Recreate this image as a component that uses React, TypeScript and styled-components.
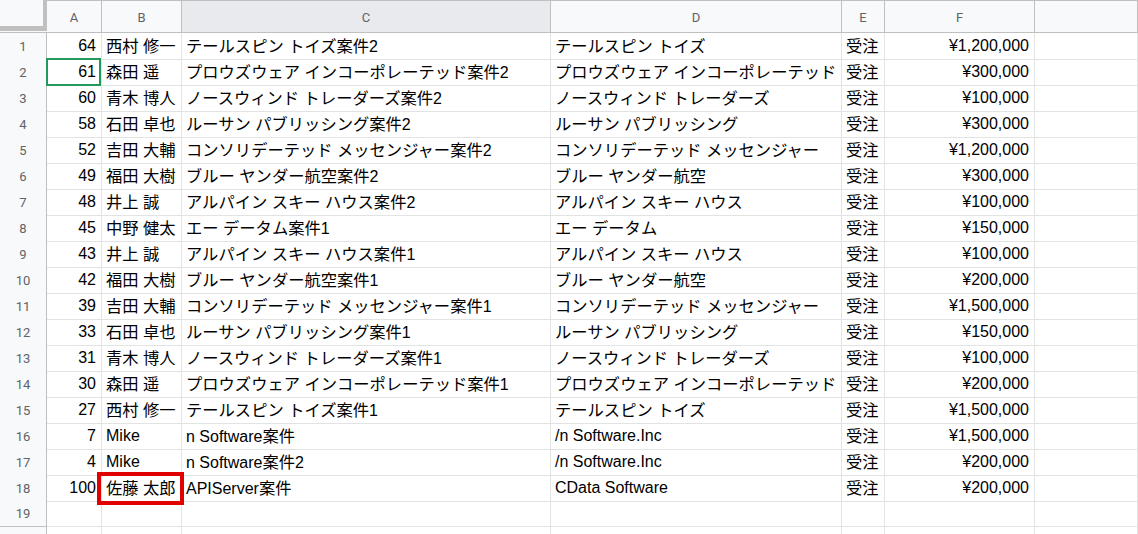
import React from "react";
import styled, { createGlobalStyle, css } from "styled-components";

const Global = createGlobalStyle`
  html, body { margin: 0; padding: 0; background: #fff; overflow: hidden; }
  body { font-family: "Liberation Sans", "Noto Sans CJK JP", sans-serif; }
`;

const COLS = "47px 55px 80px 369px 291px 43px 150px 1fr";

const Sheet = styled.div`
  width: 1138px;
  height: 534px;
  overflow: hidden;
  display: flex;
  flex-direction: column;
`;

const HeaderRow = styled.div`
  display: grid;
  grid-template-columns: ${COLS};
  height: 33px;
  flex: none;
`;

const Corner = styled.div`
  box-sizing: border-box;
  background: #f8f9fa;
  border-bottom: 1px solid #c0c0c0;
  display: flex;
  flex-direction: column;
`;

const CornerInner = styled.div`
  box-sizing: border-box;
  width: 47px;
  height: 31px;
  border-right: 4px solid #c0c0c0;
  border-bottom: 5px solid #c0c0c0;
`;

const ColHead = styled.div<{ $active?: boolean }>`
  box-sizing: border-box;
  border-top: 1px solid #c0c0c0;
  border-bottom: 1px solid #c0c0c0;
  border-right: 1px solid #c0c0c0;
  background: ${(p) => (p.$active ? "#e8eaed" : "#f8f9fa")};
  color: #5f6368;
  font-family: Roboto, "Liberation Sans", sans-serif;
  font-size: 13px;
  display: flex;
  align-items: center;
  justify-content: center;
  padding-top: 1px;
`;

const Row = styled.div`
  display: grid;
  grid-template-columns: ${COLS};
  height: 26px;
  flex: none;
`;

const RowHead = styled.div`
  box-sizing: border-box;
  background: #f8f9fa;
  border-right: 1px solid #c0c0c0;
  border-bottom: 1px solid #c0c0c0;
  color: #5f6368;
  font-family: Roboto, "Liberation Sans", sans-serif;
  font-size: 13px;
  display: flex;
  align-items: center;
  justify-content: center;
`;

const Cell = styled.div<{ $num?: boolean }>`
  position: relative;
  box-sizing: border-box;
  border-right: 1px solid #e2e3e3;
  border-bottom: 1px solid #e2e3e3;
  color: #000;
  font-size: 16px;
  line-height: 25px;
  white-space: nowrap;
  padding: 0 4px;
  text-align: ${(p) => (p.$num ? "right" : "left")};
  ${(p) =>
    p.$num &&
    css`
      padding-right: 5px;
    `}
`;

const Jp = styled.span`
  font-family: "Noto Sans CJK JP", sans-serif;
  font-size: 16.3px;
`;

const Selection = styled.div`
  position: absolute;
  top: -1px;
  left: -1px;
  right: 0;
  bottom: -1px;
  border: 2px solid #219a5b;
  pointer-events: none;
`;

const Highlight = styled.div`
  position: absolute;
  top: -3px;
  left: -5px;
  right: -3px;
  bottom: -4px;
  border: 4px solid #e00000;
  pointer-events: none;
  z-index: 2;
`;

const CJK = /[\u3000-\u30ff\u3400-\u9fff\uff00-\uffef]/;

function Txt({ t }: { t: string }) {
  const parts: { jp: boolean; s: string }[] = [];
  for (const ch of t) {
    const jp = CJK.test(ch);
    const last = parts[parts.length - 1];
    if (last && last.jp === jp) last.s += ch;
    else parts.push({ jp, s: ch });
  }
  return (
    <>
      {parts.map((p, i) => (p.jp ? <Jp key={i}>{p.s}</Jp> : <span key={i}>{p.s}</span>))}
    </>
  );
}

type R = [string, string, string, string, string, string];

const data: R[] = [
  ["64", "西村 修一", "テールスピン トイズ案件2", "テールスピン トイズ", "受注", "¥1,200,000"],
  ["61", "森田 遥", "プロウズウェア インコーポレーテッド案件2", "プロウズウェア インコーポレーテッド", "受注", "¥300,000"],
  ["60", "青木 博人", "ノースウィンド トレーダーズ案件2", "ノースウィンド トレーダーズ", "受注", "¥100,000"],
  ["58", "石田 卓也", "ルーサン パブリッシング案件2", "ルーサン パブリッシング", "受注", "¥300,000"],
  ["52", "吉田 大輔", "コンソリデーテッド メッセンジャー案件2", "コンソリデーテッド メッセンジャー", "受注", "¥1,200,000"],
  ["49", "福田 大樹", "ブルー ヤンダー航空案件2", "ブルー ヤンダー航空", "受注", "¥300,000"],
  ["48", "井上 誠", "アルパイン スキー ハウス案件2", "アルパイン スキー ハウス", "受注", "¥100,000"],
  ["45", "中野 健太", "エー データム案件1", "エー データム", "受注", "¥150,000"],
  ["43", "井上 誠", "アルパイン スキー ハウス案件1", "アルパイン スキー ハウス", "受注", "¥100,000"],
  ["42", "福田 大樹", "ブルー ヤンダー航空案件1", "ブルー ヤンダー航空", "受注", "¥200,000"],
  ["39", "吉田 大輔", "コンソリデーテッド メッセンジャー案件1", "コンソリデーテッド メッセンジャー", "受注", "¥1,500,000"],
  ["33", "石田 卓也", "ルーサン パブリッシング案件1", "ルーサン パブリッシング", "受注", "¥150,000"],
  ["31", "青木 博人", "ノースウィンド トレーダーズ案件1", "ノースウィンド トレーダーズ", "受注", "¥100,000"],
  ["30", "森田 遥", "プロウズウェア インコーポレーテッド案件1", "プロウズウェア インコーポレーテッド", "受注", "¥200,000"],
  ["27", "西村 修一", "テールスピン トイズ案件1", "テールスピン トイズ", "受注", "¥1,500,000"],
  ["7", "Mike", "n Software案件", "/n Software.Inc", "受注", "¥1,500,000"],
  ["4", "Mike", "n Software案件2", "/n Software.Inc", "受注", "¥200,000"],
  ["100", "佐藤 太郎", "APIServer案件", "CData Software", "受注", "¥200,000"],
  ["", "", "", "", "", ""],
  ["", "", "", "", "", ""],
];

const letters = ["A", "B", "C", "D", "E", "F", ""];

export default function App() {
  return (
    <Sheet>
      <Global />
      <HeaderRow>
        <Corner>
          <CornerInner />
        </Corner>
        {letters.map((l, i) => (
          <ColHead key={i} $active={l === "C"}>
            {l}
          </ColHead>
        ))}
      </HeaderRow>
      {data.map((r, i) => (
        <Row key={i}>
          <RowHead>{i < 19 ? i + 1 : ""}</RowHead>
          <Cell $num>
            {r[0]}
            {i === 1 && <Selection />}
          </Cell>
          <Cell>
            <Txt t={r[1]} />
            {i === 17 && <Highlight />}
          </Cell>
          <Cell>
            <Txt t={r[2]} />
          </Cell>
          <Cell>
            <Txt t={r[3]} />
          </Cell>
          <Cell>
            <Txt t={r[4]} />
          </Cell>
          <Cell $num>{r[5]}</Cell>
          <Cell />
        </Row>
      ))}
    </Sheet>
  );
}
